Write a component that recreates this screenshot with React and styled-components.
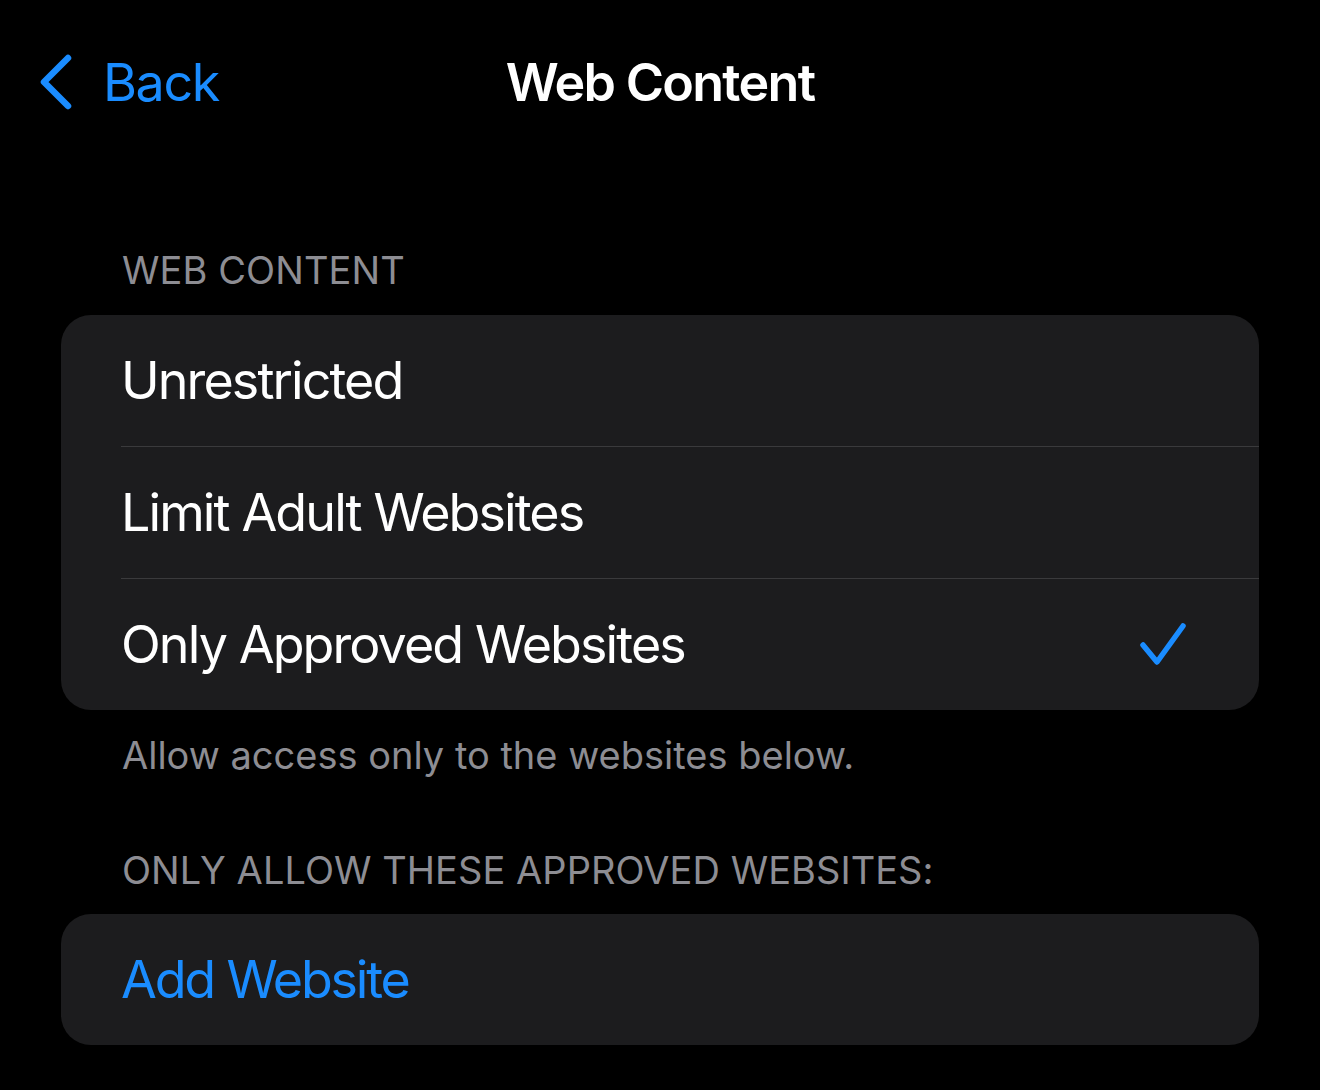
import styled, { createGlobalStyle } from "styled-components"

const GlobalStyle = createGlobalStyle`
    html, body {
        margin: 0;
        padding: 0;
        background: #000;
    }
    body {
        font-family: Inter, "Noto Sans", "Liberation Sans", sans-serif;
        -webkit-font-smoothing: antialiased;
    }
`

const Screen = styled.div`
    width: 1320px;
    height: 1090px;
    background: #000;
    overflow: hidden;
`

const NavBar = styled.header`
    display: grid;
    grid-template-columns: 1fr auto 1fr;
    align-items: center;
    height: 164px;
    padding: 0 38px;
    box-sizing: border-box;
`

const BackButton = styled.button`
    display: flex;
    align-items: center;
    gap: 31px;
    justify-self: start;
    background: none;
    border: none;
    padding: 0;
    color: #1a8cff;
    font-family: inherit;
    font-size: 52px;
    letter-spacing: -1.4px;
    cursor: pointer;

    svg {
        flex-shrink: 0;
    }
`

const Title = styled.h1`
    margin: 0;
    color: #fff;
    font-size: 52px;
    font-weight: 600;
    letter-spacing: -1.7px;
`

const Content = styled.main`
    padding: 0 61px;
    display: flex;
    flex-direction: column;
`

const SectionHeader = styled.div`
    padding: ${p => p.$top || 0}px 61px 0;
    height: ${p => p.$height}px;
    box-sizing: border-box;
    color: #8d8d93;
    font-size: 38px;
    letter-spacing: ${p => p.$spacing}px;
    line-height: 1;
`

const Footer = styled.div`
    padding: 26px 61px 0;
    height: 130px;
    box-sizing: border-box;
    color: #8d8d93;
    font-size: 38px;
    letter-spacing: 0;
    line-height: 1;
`

const Card = styled.div`
    background: #1c1c1e;
    border-radius: 30px;
    overflow: hidden;
`

const Row = styled.div`
    display: flex;
    align-items: center;
    justify-content: space-between;
    height: ${p => (p.$first ? 131 : 132)}px;
    margin-left: 60px;
    padding-right: 72px;
    border-top: ${p => (p.$first ? "none" : "1px solid #3a3a3c")};
    color: ${p => (p.$accent ? "#1a8cff" : "#fff")};
    font-size: 52px;
    letter-spacing: ${p => (p.$accent ? -2.2 : -1.9)}px;
    box-sizing: border-box;
`

function Chevron() {
    return (
        <svg width="34" height="56" viewBox="0 0 34 56" fill="none">
            <path d="M30 4 L6 28 L30 52" stroke="#1a8cff" strokeWidth="6.5" strokeLinecap="round" strokeLinejoin="round" />
        </svg>
    )
}

function Check() {
    return (
        <svg width="48" height="46" viewBox="0 0 48 46" fill="none">
            <path d="M4 23 L18 40 L44 4" stroke="#1a8cff" strokeWidth="5.5" strokeLinecap="round" strokeLinejoin="round" />
        </svg>
    )
}

const options = ["Unrestricted", "Limit Adult Websites", "Only Approved Websites"]

export default function App() {
    const selected = 2
    return (
        <Screen>
            <GlobalStyle />
            <NavBar>
                <BackButton>
                    <Chevron />
                    Back
                </BackButton>
                <Title>Web Content</Title>
                <span />
            </NavBar>
            <Content>
                <SectionHeader $top={87} $height={151} $spacing={0.1}>WEB CONTENT</SectionHeader>
                <Card>
                    {options.map((o, i) => (
                        <Row key={o} $first={i === 0}>
                            {o}
                            {i === selected && <Check />}
                        </Row>
                    ))}
                </Card>
                <Footer>Allow access only to the websites below.</Footer>
                <SectionHeader $top={11} $height={74} $spacing={0.05}>ONLY ALLOW THESE APPROVED WEBSITES:</SectionHeader>
                <Card>
                    <Row $first $accent>Add Website</Row>
                </Card>
            </Content>
        </Screen>
    )
}
